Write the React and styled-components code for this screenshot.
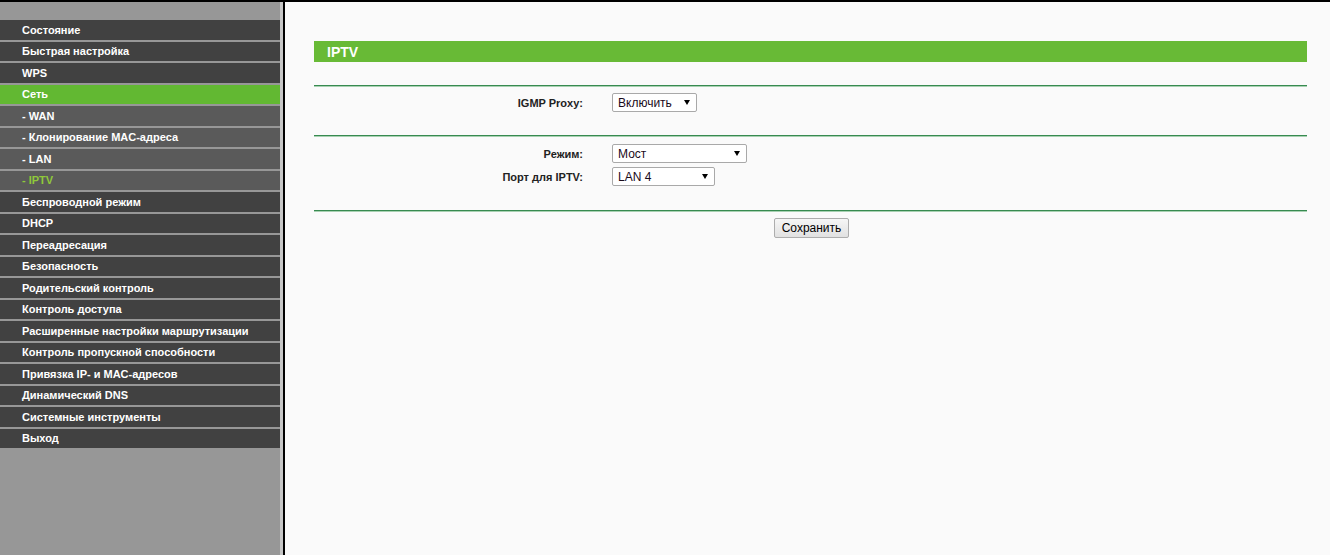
import React from "react";
import styled, { createGlobalStyle } from "styled-components";

const Global = createGlobalStyle`
  html, body { margin: 0; padding: 0; background: #fafafa; }
  body { font-family: "Liberation Sans", Arial, sans-serif; }
`;

const Page = styled.div`
  display: flex;
  height: 555px;
  border-top: 2px solid #000;
  box-sizing: border-box;
  overflow: hidden;
`;

const Sidebar = styled.nav`
  width: 280px;
  flex: none;
  background: #979797;
  display: flex;
  flex-direction: column;
  padding-top: 18px;
  gap: 2px;
`;

const Item = styled.div`
  height: 19.5px;
  display: flex;
  align-items: center;
  padding-left: 22px;
  font-size: 11px;
  font-weight: bold;
  color: ${(p) => (p.$current ? "#8fc83a" : "#fff")};
  background: ${(p) => (p.$active ? "#62b832" : p.$sub ? "#5a5a5a" : "#414141")};
  white-space: nowrap;
`;

const Splitter = styled.div`
  width: 3px;
  flex: none;
  background: #c6c6c6;
  border-right: 2px solid #000;
`;

const Main = styled.main`
  flex: 1;
  background: #fafafa;
  padding: 39px 23px 0 29px;
  min-width: 0;
`;

const TitleBar = styled.div`
  height: 21px;
  background: #68ba36;
  color: #fff;
  font-size: 14px;
  font-weight: bold;
  display: flex;
  align-items: center;
  padding-left: 13px;
  margin-bottom: 23px;
`;

const Section = styled.section`
  border-top: 1px solid #378a50;
  box-shadow: inset 0 1px 0 #a8d1b2;
  padding: ${(p) => p.$top}px 0 ${(p) => p.$bottom}px;
  display: flex;
  flex-direction: column;
  gap: 4px;
`;

const Row = styled.div`
  display: grid;
  grid-template-columns: 269px auto;
  column-gap: 29px;
  align-items: center;
  height: 19px;
`;

const Label = styled.div`
  text-align: right;
  font-size: 11px;
  font-weight: bold;
  color: #222;
`;

const Select = styled.div`
  width: ${(p) => p.$w}px;
  height: 19px;
  box-sizing: border-box;
  border: 1px solid #a9a9a9;
  border-radius: 2px;
  background: #fff;
  display: flex;
  align-items: center;
  justify-content: space-between;
  padding: 0 6px 0 5px;
  font-size: 12px;
  color: #1a0a1a;
`;

const Arrow = styled.span`
  width: 0;
  height: 0;
  border-left: 3px solid transparent;
  border-right: 3px solid transparent;
  border-top: 5px solid #000;
`;

const Actions = styled.div`
  display: flex;
  justify-content: center;
  padding-left: 2px;
`;

const Button = styled.button`
  font-family: "Liberation Sans", Arial, sans-serif;
  font-size: 12px;
  color: #000;
  width: 75px;
  height: 20px;
  padding: 0;
  border: 1px solid #adadad;
  border-radius: 2px;
  background: linear-gradient(#f6f6f6, #e1e1e1);
`;

const menu = [
  { t: "Состояние" },
  { t: "Быстрая настройка" },
  { t: "WPS" },
  { t: "Сеть", active: true },
  { t: "- WAN", sub: true },
  { t: "- Клонирование MAC-адреса", sub: true },
  { t: "- LAN", sub: true },
  { t: "- IPTV", sub: true, current: true },
  { t: "Беспроводной режим" },
  { t: "DHCP" },
  { t: "Переадресация" },
  { t: "Безопасность" },
  { t: "Родительский контроль" },
  { t: "Контроль доступа" },
  { t: "Расширенные настройки маршрутизации" },
  { t: "Контроль пропускной способности" },
  { t: "Привязка IP- и MAC-адресов" },
  { t: "Динамический DNS" },
  { t: "Системные инструменты" },
  { t: "Выход" },
];

export default function App() {
  return (
    <>
      <Global />
      <Page>
        <Sidebar>
          {menu.map((m) => (
            <Item key={m.t} $active={m.active} $sub={m.sub} $current={m.current}>
              {m.t}
            </Item>
          ))}
        </Sidebar>
        <Splitter />
        <Main>
          <TitleBar>IPTV</TitleBar>
          <Section $top={7} $bottom={23}>
            <Row>
              <Label>IGMP Proxy:</Label>
              <Select $w={85}>
                Включить <Arrow />
              </Select>
            </Row>
          </Section>
          <Section $top={8} $bottom={24}>
            <Row>
              <Label>Режим:</Label>
              <Select $w={135}>
                Мост <Arrow />
              </Select>
            </Row>
            <Row>
              <Label>Порт для IPTV:</Label>
              <Select $w={103}>
                LAN 4 <Arrow />
              </Select>
            </Row>
          </Section>
          <Section $top={7} $bottom={0}>
            <Actions>
              <Button>Сохранить</Button>
            </Actions>
          </Section>
        </Main>
      </Page>
    </>
  );
}
